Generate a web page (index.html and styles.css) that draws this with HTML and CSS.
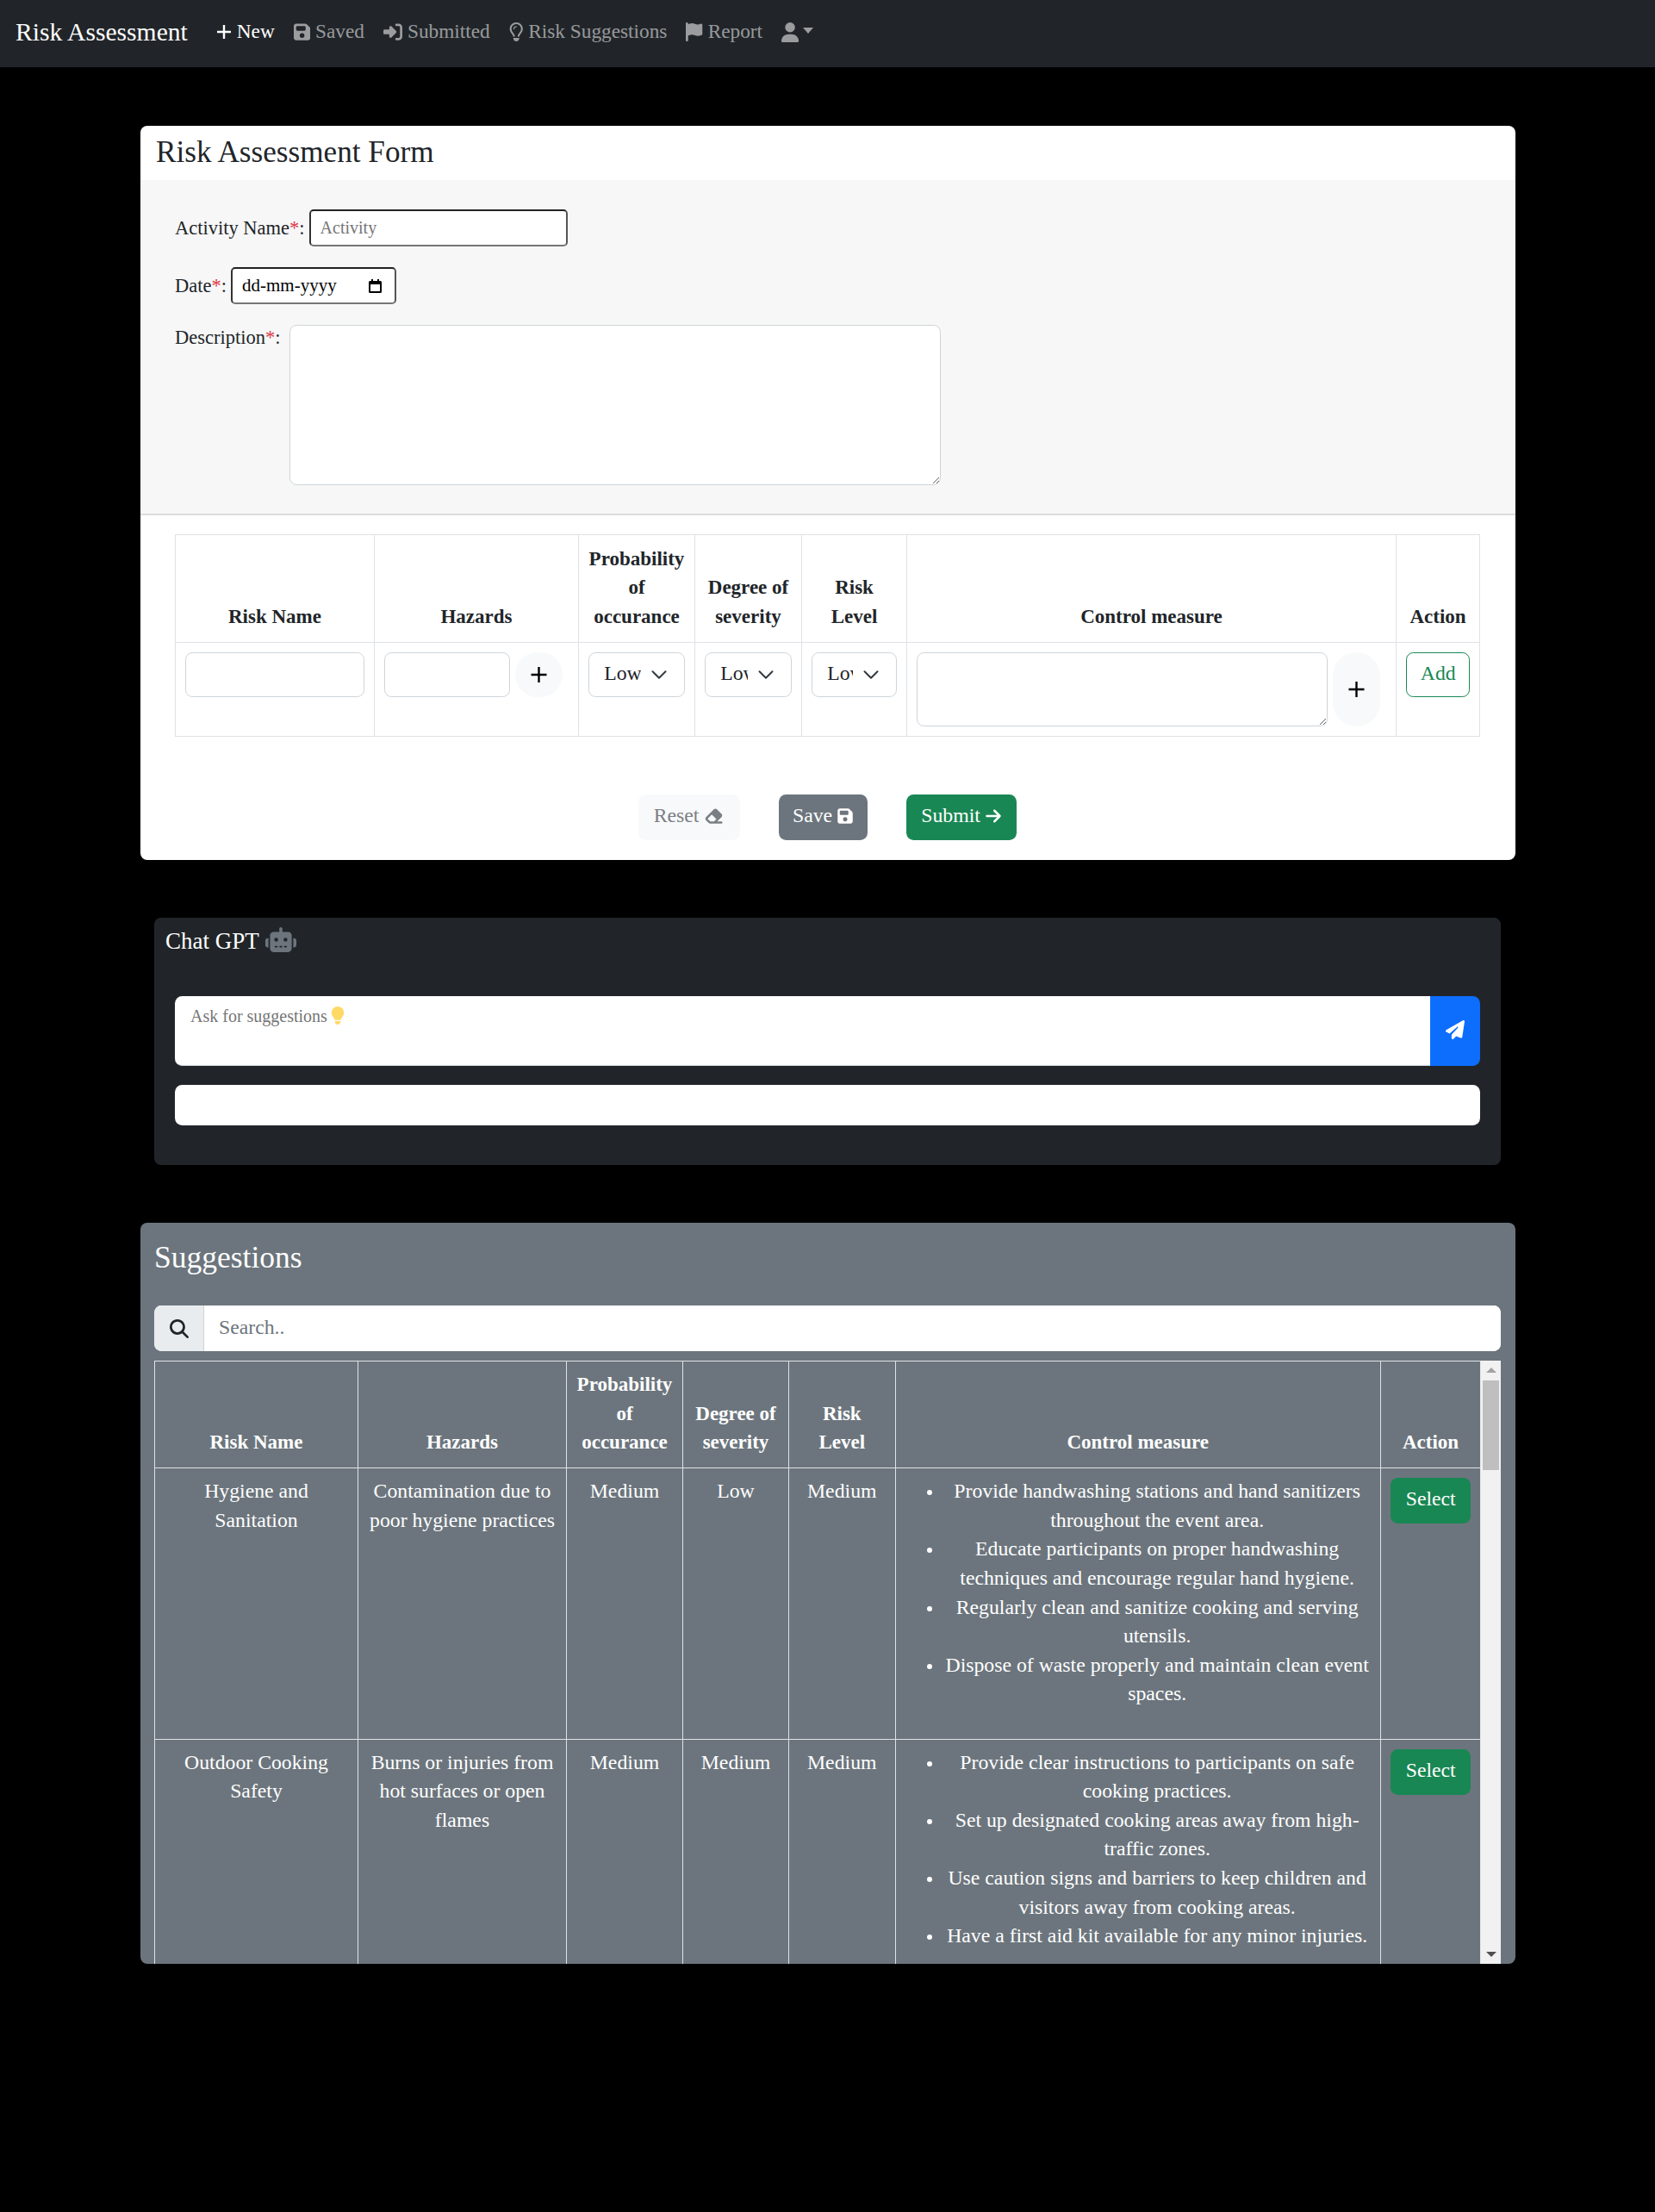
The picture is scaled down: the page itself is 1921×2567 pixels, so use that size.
FILE: index.html
```html
<!DOCTYPE html>
<html lang="en">
<head>
<meta charset="utf-8">
<title>Risk Assessment</title>
<link rel="stylesheet" href="styles.css">
</head>
<body>
<nav class="navbar">
  <a class="brand">Risk Assessment</a>
  <a class="nav-link active"><svg class="ico ico-plus" viewBox="0 0 18 18"><path d="M9 1v16M1 9h16" fill="none" stroke="currentColor" stroke-width="2.4"/></svg>New</a>
  <a class="nav-link"><svg class="ico" viewBox="0 0 448 512"><path d="M64 32C28.7 32 0 60.7 0 96V416c0 35.3 28.7 64 64 64H384c35.3 0 64-28.7 64-64V173.3c0-17-6.7-33.3-18.7-45.3L352 50.7C340 38.7 323.7 32 306.7 32H64zm0 96c0-17.7 14.3-32 32-32H288c17.7 0 32 14.3 32 32v64c0 17.7-14.3 32-32 32H96c-17.7 0-32-14.3-32-32V128zM224 288a64 64 0 1 1 0 128 64 64 0 1 1 0-128z"/></svg>Saved</a>
  <a class="nav-link"><svg class="ico" viewBox="0 0 512 512"><path d="M217.9 105.9L340.7 228.7c7.2 7.2 11.3 17.1 11.3 27.3s-4.1 20.1-11.3 27.3L217.9 406.1c-6.4 6.4-15 9.9-24 9.9c-18.7 0-33.9-15.2-33.9-33.9l0-62.1L32 320c-17.7 0-32-14.3-32-32l0-64c0-17.7 14.3-32 32-32l128 0 0-62.1c0-18.7 15.2-33.9 33.9-33.9c9 0 17.6 3.6 24 9.9zM352 416l64 0c17.7 0 32-14.3 32-32l0-256c0-17.7-14.3-32-32-32l-64 0c-17.7 0-32-14.3-32-32s14.3-32 32-32l64 0c53 0 96 43 96 96l0 256c0 53-43 96-96 96l-64 0c-17.7 0-32-14.3-32-32s14.3-32 32-32z"/></svg>Submitted</a>
  <a class="nav-link"><svg class="ico" viewBox="0 0 384 512"><path d="M297.2 248.9C311.6 228.3 320 203.2 320 176c0-70.7-57.3-128-128-128S64 105.3 64 176c0 27.2 8.4 52.3 22.8 72.9c3.7 5.3 8.1 11.3 12.8 17.7l0 0c12.9 17.7 28.3 38.9 39.8 59.8c10.4 19 15.7 38.8 18.3 57.5H109c-2.2-12-5.9-23.7-11.8-34.5c-9.9-18-22.2-34.9-34.5-51.8l0 0 0 0c-5.2-7.1-10.4-14.2-15.4-21.4C27.6 247.9 16 213.3 16 176C16 78.8 94.8 0 192 0s176 78.8 176 176c0 37.3-11.6 71.9-31.4 100.3c-5 7.2-10.2 14.3-15.4 21.4l0 0 0 0c-12.3 16.8-24.6 33.7-34.5 51.8c-5.9 10.8-9.6 22.5-11.8 34.5H226.4c2.6-18.7 7.9-38.6 18.3-57.5c11.5-20.9 26.9-42.1 39.8-59.8l0 0 0 0 0 0c4.7-6.4 9-12.4 12.7-17.7zM192 128c-26.5 0-48 21.5-48 48c0 8.8-7.2 16-16 16s-16-7.2-16-16c0-44.2 35.8-80 80-80c8.8 0 16 7.2 16 16s-7.2 16-16 16zm0 384c-44.2 0-80-35.8-80-80V416H272v16c0 44.2-35.8 80-80 80z"/></svg>Risk Suggestions</a>
  <a class="nav-link"><svg class="ico" viewBox="0 0 448 512"><path d="M64 32C64 14.3 49.7 0 32 0S0 14.3 0 32V64 368 480c0 17.7 14.3 32 32 32s32-14.3 32-32V352l64.3-16.1c41.1-10.3 84.6-5.5 122.5 13.4c44.2 22.1 95.5 24.8 141.7 7.4l34.7-13c12.5-4.7 20.8-16.6 20.8-30V66.1c0-23-24.2-38-44.8-27.7l-9.6 4.8c-46.3 23.2-100.8 23.2-147.1 0c-35.1-17.6-75.4-22-113.5-12.5L64 48V32z"/></svg>Report</a>
  <a class="nav-link"><svg class="ico ico-user" viewBox="0 0 448 512"><path d="M224 256A128 128 0 1 0 224 0a128 128 0 1 0 0 256zm-45.7 48C79.8 304 0 383.8 0 482.3C0 498.7 13.3 512 29.7 512H418.3c16.4 0 29.7-13.3 29.7-29.7C448 383.8 368.2 304 269.7 304H178.3z"/></svg><span class="caret"></span></a>
</nav>

<main class="page">
  <section class="card form-card">
    <h1 class="card-title">Risk Assessment Form</h1>
    <div class="form-top">
      <div class="field">
        <label class="lbl">Activity Name<span class="req">*</span>:</label>
        <input class="native activity" type="text" placeholder="Activity">
      </div>
      <div class="field">
        <label class="lbl">Date<span class="req">*</span>:</label>
        <div class="native date"><span>dd-mm-yyyy</span><svg class="cal" viewBox="0 0 15 16"><path d="M3 0h2v2h5V0h2v2h1.5A1.5 1.5 0 0 1 15 3.500v11a1.500 1.500 0 0 1-1.500 1.500h-12A1.500 1.500 0 0 1 0 14.500v-11A1.500 1.500 0 0 1 1.500 2H3zM2 6v8h11V6z"/></svg></div>
      </div>
      <div class="field field-desc">
        <label class="lbl">Description<span class="req">*</span>:</label>
        <textarea class="desc"></textarea>
      </div>
    </div>
    <div class="form-bottom">
      <table class="grid grid-form">
        <colgroup><col class="a1"><col class="a2"><col class="a3"><col class="a4"><col class="a5"><col class="a6"><col class="a7"></colgroup>
        <thead>
          <tr><th>Risk Name</th><th>Hazards</th><th>Probability of occurance</th><th>Degree of severity</th><th>Risk Level</th><th>Control measure</th><th>Action</th></tr>
        </thead>
        <tbody>
          <tr>
            <td><input class="ctl" type="text"></td>
            <td><div class="with-add"><input class="ctl" type="text"><button class="pill" type="button"><svg viewBox="0 0 18 18"><path d="M9 0v18M0 9h18" fill="none" stroke="#000" stroke-width="2.4"/></svg></button></div></td>
            <td><select class="ctl sel"><option>Low</option></select></td>
            <td><select class="ctl sel"><option>Low</option></select></td>
            <td><select class="ctl sel"><option>Low</option></select></td>
            <td><div class="with-add"><textarea class="ctl ctl-area"></textarea><button class="pill" type="button"><svg viewBox="0 0 18 18"><path d="M9 0v18M0 9h18" fill="none" stroke="#000" stroke-width="2.4"/></svg></button></div></td>
            <td><button class="btn btn-add" type="button">Add</button></td>
          </tr>
        </tbody>
      </table>
      <div class="actions">
        <button class="btn btn-reset" type="button">Reset <svg class="ico-btn ico-eraser" viewBox="0 0 576 512"><path d="M290.7 57.4L57.4 290.7c-25 25-25 65.5 0 90.5l80 80c12 12 28.3 18.7 45.3 18.7H288h9.4H512c17.7 0 32-14.3 32-32s-14.3-32-32-32H387.9L518.6 285.3c25-25 25-65.5 0-90.5L381.3 57.4c-25-25-65.5-25-90.5 0zM297.4 416H288l-105.4 0-80-80L227.3 211.3 364.7 348.7 297.4 416z"/></svg></button>
        <button class="btn btn-save" type="button">Save <svg class="ico-btn" viewBox="0 0 448 512"><path d="M64 32C28.7 32 0 60.7 0 96V416c0 35.3 28.7 64 64 64H384c35.3 0 64-28.7 64-64V173.3c0-17-6.7-33.3-18.7-45.3L352 50.7C340 38.7 323.7 32 306.7 32H64zm0 96c0-17.7 14.3-32 32-32H288c17.7 0 32 14.3 32 32v64c0 17.7-14.3 32-32 32H96c-17.7 0-32-14.3-32-32V128zM224 288a64 64 0 1 1 0 128 64 64 0 1 1 0-128z"/></svg></button>
        <button class="btn btn-submit" type="button">Submit <svg class="ico-btn" viewBox="0 0 448 512"><path d="M438.6 278.6c12.5-12.5 12.5-32.8 0-45.3l-160-160c-12.5-12.5-32.8-12.5-45.3 0s-12.5 32.8 0 45.3L338.8 224 32 224c-17.7 0-32 14.3-32 32s14.3 32 32 32l306.7 0L233.4 393.4c-12.5 12.5-12.5 32.8 0 45.3s32.8 12.5 45.3 0l160-160z"/></svg></button>
      </div>
    </div>
  </section>

  <section class="card chat-card">
    <h2 class="chat-title">Chat GPT <svg class="ico-robot" viewBox="0 0 640 512"><path d="M320 0c17.7 0 32 14.3 32 32V96H472c39.8 0 72 32.2 72 72V440c0 39.8-32.2 72-72 72H168c-39.8 0-72-32.2-72-72V168c0-39.8 32.2-72 72-72H288V32c0-17.7 14.3-32 32-32zM208 384c-8.8 0-16 7.2-16 16s7.2 16 16 16h32c8.8 0 16-7.2 16-16s-7.2-16-16-16H208zm96 0c-8.8 0-16 7.2-16 16s7.2 16 16 16h32c8.8 0 16-7.2 16-16s-7.2-16-16-16H304zm96 0c-8.8 0-16 7.2-16 16s7.2 16 16 16h32c8.8 0 16-7.2 16-16s-7.2-16-16-16H400zM264 256a40 40 0 1 0 -80 0 40 40 0 1 0 80 0zm152 40a40 40 0 1 0 0-80 40 40 0 1 0 0 80zM48 224H64V416H48c-26.5 0-48-21.5-48-48V272c0-26.5 21.5-48 48-48zm544 0c26.5 0 48 21.5 48 48v96c0 26.5-21.5 48-48 48H576V224h16z"/></svg></h2>
    <div class="ask">
      <div class="ask-input"><span class="ask-ph">Ask for suggestions</span><svg class="ico-bulb" viewBox="0 0 384 512"><path d="M272 384c9.6-31.9 29.5-59.1 49.2-86.2l0 0c5.2-7.1 10.4-14.2 15.4-21.4c19.8-28.5 31.4-63 31.4-100.3C368 78.8 289.2 0 192 0S16 78.8 16 176c0 37.3 11.6 71.9 31.4 100.3c5 7.2 10.2 14.3 15.4 21.4l0 0c19.8 27.1 39.7 54.4 49.2 86.2H272zM192 512c44.2 0 80-35.8 80-80V416H112v16c0 44.2 35.8 80 80 80z"/></svg></div>
      <button class="send" type="button"><svg viewBox="0 0 512 512"><path d="M498.1 5.6c10.1 7 15.4 19.1 13.5 31.2l-64 416c-1.5 9.7-7.4 18.2-16 23s-18.9 5.4-28 1.6L284 427.7l-68.5 74.1c-8.9 9.7-22.9 12.9-35.2 8.1S160 493.2 160 480V396.4c0-4 1.5-7.8 4.2-10.7L331.8 202.8c5.8-6.3 5.6-16-.4-22s-15.7-6.4-22-.7L106 360.8 17.7 316.6C7.1 311.3 .3 300.7 0 288.9s5.9-22.8 16.1-28.7l448-256c10.7-6.1 23.9-5.5 34 1.4z"/></svg></button>
    </div>
    <div class="answer"></div>
  </section>

  <section class="card sug-card">
    <h2 class="sug-title">Suggestions</h2>
    <div class="search">
      <span class="search-addon"><svg viewBox="0 0 512 512"><path d="M416 208c0 45.9-14.9 88.3-40 122.7L502.6 457.4c12.5 12.5 12.5 32.8 0 45.3s-32.8 12.5-45.3 0L330.7 376c-34.4 25.2-76.8 40-122.7 40C93.1 416 0 322.9 0 208S93.1 0 208 0S416 93.1 416 208zM208 352a144 144 0 1 0 0-288 144 144 0 1 0 0 288z"/></svg></span>
      <input class="search-input" type="text" placeholder="Search..">
    </div>
    <div class="scroller">
      <div class="scroll-view">
        <table class="grid grid-sug">
          <colgroup><col class="b1"><col class="b2"><col class="b3"><col class="b4"><col class="b5"><col class="b6"><col class="b7"></colgroup>
          <thead>
            <tr><th>Risk Name</th><th>Hazards</th><th>Probability of occurance</th><th>Degree of severity</th><th>Risk Level</th><th>Control measure</th><th>Action</th></tr>
          </thead>
          <tbody>
            <tr>
              <td>Hygiene and Sanitation</td>
              <td>Contamination due to poor hygiene practices</td>
              <td>Medium</td><td>Low</td><td>Medium</td>
              <td><ul class="measures">
                <li>Provide handwashing stations and hand sanitizers throughout the event area.</li>
                <li>Educate participants on proper handwashing techniques and encourage regular hand hygiene.</li>
                <li>Regularly clean and sanitize cooking and serving utensils.</li>
                <li>Dispose of waste properly and maintain clean event spaces.</li>
              </ul></td>
              <td><button class="btn btn-select" type="button">Select</button></td>
            </tr>
            <tr>
              <td>Outdoor Cooking Safety</td>
              <td>Burns or injuries from hot surfaces or open flames</td>
              <td>Medium</td><td>Medium</td><td>Medium</td>
              <td><ul class="measures">
                <li>Provide clear instructions to participants on safe cooking practices.</li>
                <li>Set up designated cooking areas away from high-traffic zones.</li>
                <li>Use caution signs and barriers to keep children and visitors away from cooking areas.</li>
                <li>Have a first aid kit available for any minor injuries.</li>
              </ul></td>
              <td><button class="btn btn-select" type="button">Select</button></td>
            </tr>
          </tbody>
        </table>
      </div>
      <div class="scrollbar">
        <span class="arrow arrow-up"></span>
        <span class="thumb"></span>
        <span class="arrow arrow-down"></span>
      </div>
    </div>
  </section>
</main>
</body>
</html>
```
FILE: styles.css
```css
* { box-sizing: border-box; }
html, body { margin: 0; }
body {
  min-height: 2567px;
  background: #000;
  color: #212529;
  font-family: "Liberation Serif", "Times New Roman", serif;
  font-size: 23.75px;
  line-height: 33.6px;
}
button, input, select, textarea { font-family: inherit; }

/* navbar */
.navbar {
  height: 78px;
  background: #212529;
  display: flex;
  align-items: center;
  padding: 0 0 4px 18px;
}
.brand { color: #fff; font-size: 29.6px; line-height: 40px; margin-right: 22px; }
.nav-link {
  display: flex;
  align-items: center;
  gap: 6px;
  padding: 0 11px;
  font-size: 23.3px;
  color: rgba(255, 255, 255, .55);
}
.nav-link.active { color: #fff; }
.ico { width: auto; height: 22px; fill: currentColor; flex: none; }
.ico-plus { width: 18px; height: 18px; }
.ico-user { height: 23px; }
.caret {
  width: 0; height: 0;
  border-top: 7px solid currentColor;
  border-left: 6px solid transparent;
  border-right: 6px solid transparent;
  margin-top: -3px;
  margin-left: -1px;
}

/* page */
.page { display: flex; flex-direction: column; gap: 67px; padding: 68px 162px 0 163px; }
.card { border-radius: 8px; overflow: hidden; }

/* form card */
.form-card { background: #fff; height: 852px; }
.card-title { margin: 0; height: 63px; padding-left: 18px; font-size: 35.2px; font-weight: 400; line-height: 61px; }
.form-top {
  height: 389px;
  background: #f7f7f7;
  border-bottom: 2px solid #dcdcdc;
  padding: 34px 40px 0;
  display: flex;
  flex-direction: column;
  gap: 24px;
}
.field { display: flex; align-items: center; gap: 5px; }
.lbl { font-size: 22.5px; }
.field-desc { align-items: flex-start; }
.field-desc .lbl { position: relative; top: -2px; }
.req { color: #dc3545; }
.native {
  height: 43px;
  border-width: 2px;
  border-style: solid;
  border-color: #222 #555 #767676 #333;
  border-radius: 5px;
  background: #fff;
  font-size: 21px;
  padding: 0 11px;
  color: #000;
}
.native::placeholder { color: #757575; font-size: 20px; }
.activity { width: 300px; }
.date { width: 192px; display: flex; align-items: center; justify-content: space-between; padding-right: 15px; }
.cal { width: 15px; height: 16px; fill: #000; }
.desc {
  width: 756px; height: 186px;
  margin-left: 5px;
  border: 1px solid #ced4da;
  border-radius: 8.4px;
  background: #fff;
}
.form-bottom { padding: 22px 42px 0 40px; }

/* shared tables */
.grid { border-collapse: collapse; table-layout: fixed; width: 100%; }
.grid th, .grid td { padding: 10px 11.2px 12.4px; text-align: center; border: 1px solid #dee2e6; }
.grid th { vertical-align: bottom; font-size: 23px; font-weight: 700; }
.grid td { vertical-align: top; }
.grid-form td { padding: 11.2px; }
.grid-sug td .btn { margin-top: 1.2px; }

.a1 { width: 231px; } .a2 { width: 237px; } .a3 { width: 135px; } .a4 { width: 124px; }
.a5 { width: 122px; } .a6 { width: 568px; } .a7 { width: 97px; }
.grid-form { height: 234px; }
.grid-form thead tr { height: 125px; }
.ctl {
  display: block;
  width: 100%;
  height: 52px;
  border: 1px solid #ced4da;
  border-radius: 8.4px;
  background: #fff;
  font-size: 23.75px;
  color: #212529;
}
.sel {
  appearance: none;
  padding: 0 50px 5px 17px;
  background-image: url("data:image/svg+xml,%3csvg xmlns='http://www.w3.org/2000/svg' viewBox='0 0 16 16'%3e%3cpath fill='none' stroke='%23343a40' stroke-linecap='round' stroke-linejoin='round' stroke-width='1.6' d='m2 5 6 6 6-6'/%3e%3c/svg%3e");
  background-repeat: no-repeat;
  background-position: right 19px center;
  background-size: 20px 20px;
}
.with-add { display: flex; gap: 6px; align-items: stretch; padding-right: 7px; }
.with-add .ctl { flex: 1 1 auto; min-width: 0; }
.ctl-area { height: 86px; }
.pill {
  flex: none;
  width: 55px;
  padding: 0;
  border: 0;
  border-radius: 28px;
  background: #f8f9fa;
  display: flex;
  align-items: center;
  justify-content: center;
}
.pill svg { width: 19px; height: 18px; }

/* buttons */
.btn {
  height: 53px;
  padding: 0 0 4px;
  border: 1px solid transparent;
  border-radius: 8.4px;
  font-size: 23.75px;
  white-space: nowrap;
}
.btn-add { width: 74px; height: 52px; background: #fff; border-color: #198754; color: #198754; display: block; margin: 0 auto; padding-bottom: 3px; }
.btn-reset { background: #f8f9fa; color: #7a7f84; width: 118px; }
.btn-save { background: #6c757d; color: #fff; width: 103px; }
.btn-submit { background: #198754; color: #fff; width: 128px; }
.btn-select { background: #198754; color: #fff; width: 93px; display: block; margin: 0 auto; }
.ico-btn { width: 18px; height: 20px; fill: currentColor; vertical-align: -3px; }
.ico-eraser { width: 23px; }
.actions { display: flex; justify-content: center; gap: 45px; margin-top: 67px; }

/* chat */
.chat-card { background: #212529; height: 287px; margin: 0 17px 0 16px; padding: 0 24px; }
.chat-title {
  margin: 0 0 0 -11px;
  height: 91px;
  padding-top: 9px;
  color: #fff;
  font-size: 27px;
  font-weight: 400;
  line-height: 36px;
  display: flex;
  align-items: flex-start;
  gap: 7px;
}
.ico-robot { width: 36px; height: 29px; fill: #6c757d; margin-top: 2px; }
.ask { display: flex; height: 81px; }
.ask-input {
  flex: 1;
  background: #fff;
  border-radius: 8.4px 0 0 8.4px;
  border-bottom: 1px solid #ced4da;
  padding: 6px 18px;
  display: flex;
  align-items: flex-start;
  gap: 4px;
}
.ask-ph { font-size: 20px; line-height: 34px; color: #757575; }
.ico-bulb { width: 16px; height: 21px; fill: #ffd966; margin-top: 6px; }
.send {
  width: 58px;
  border: 0;
  padding: 0;
  background: #0d6efd;
  border-radius: 0 8.4px 8.4px 0;
  display: flex;
  align-items: center;
  justify-content: center;
}
.send svg { width: 22px; height: 22px; fill: #fff; margin-top: -4px; }
.answer { height: 47px; margin-top: 22px; background: #fff; border-radius: 8.4px; }

/* suggestions */
.sug-card { background: #6c757d; height: 860px; padding: 0 17px 0 16px; color: #fff; }
.sug-title { margin: 0; height: 96px; font-size: 35.5px; font-weight: 400; line-height: 46px; padding-top: 17px; }
.search { display: flex; height: 53px; border-radius: 8.4px; overflow: hidden; background: #fff; }
.search-addon {
  width: 58px;
  background: #e9ecef;
  border-right: 1px solid #ced4da;
  display: flex;
  align-items: center;
  justify-content: center;
}
.search-addon svg { width: 22px; height: 22px; fill: #212529; }
.search-input { flex: 1; border: 0; outline: 0; padding: 0 17px 3px; font-size: 23.75px; background: #fff; }
.search-input::placeholder { color: #6c757d; }
.scroller { display: flex; height: 700px; margin-top: 11px; overflow: hidden; }
.scroll-view { flex: 1; min-width: 0; overflow: hidden; }
.b1 { width: 236px; } .b2 { width: 242px; } .b3 { width: 135px; } .b4 { width: 123px; }
.b5 { width: 123.5px; } .b6 { width: 563.5px; } .b7 { width: 116px; }
.grid-sug { color: #fff; }
.grid-sug thead tr { height: 124px; }
.measures { margin: 0 0 22.4px; padding-left: 44.8px; }
.measures li::marker { font-size: 20px; }
.scrollbar {
  width: 24px;
  flex: none;
  background: #f1f1f1;
  display: flex;
  flex-direction: column;
  align-items: center;
  padding: 8px 0;
  border-left: 1px solid #e8e8e8;
}
.arrow { width: 0; height: 0; border-left: 6px solid transparent; border-right: 6px solid transparent; }
.arrow-up { border-bottom: 6px solid #a3a3a3; }
.arrow-down { border-top: 6px solid #505050; margin-top: auto; }
.thumb { width: 19px; height: 104px; background: #bfbfbf; margin-top: 9px; }
```
